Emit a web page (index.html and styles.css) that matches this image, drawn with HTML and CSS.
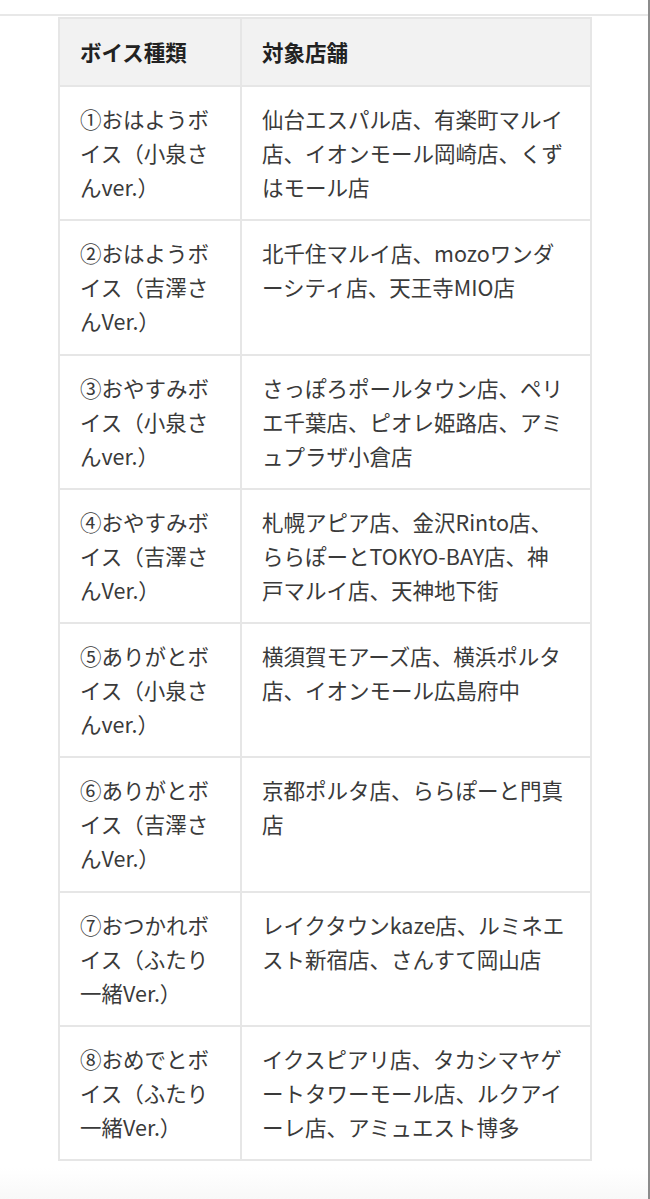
FILE: index.html
```html
<!DOCTYPE html>
<html lang="ja">
<head>
<meta charset="utf-8">
<link rel="stylesheet" href="styles.css">
</head>
<body>
<div class="page">
  <div class="rule"></div>
  <table class="voice-table">
    <colgroup><col class="c1"><col class="c2"></colgroup>
    <thead>
      <tr><th>ボイス種類</th><th>対象店舗</th></tr>
    </thead>
    <tbody>
      <tr><td>①おはようボ<br>イス（小泉さ<br>んver.）</td><td>仙台エスパル店、有楽町マルイ<br>店、イオンモール岡崎店、くず<br>はモール店</td></tr>
      <tr><td>②おはようボ<br>イス（吉澤さ<br>んVer.）</td><td>北千住マルイ店、mozoワンダ<br>ーシティ店、天王寺MIO店</td></tr>
      <tr><td>③おやすみボ<br>イス（小泉さ<br>んver.）</td><td>さっぽろポールタウン店、ペリ<br>エ千葉店、ピオレ姫路店、アミ<br>ュプラザ小倉店</td></tr>
      <tr><td>④おやすみボ<br>イス（吉澤さ<br>んVer.）</td><td>札幌アピア店、金沢Rinto店、<br>ららぽーとTOKYO-BAY店、神<br>戸マルイ店、天神地下街</td></tr>
      <tr><td>⑤ありがとボ<br>イス（小泉さ<br>んver.）</td><td>横須賀モアーズ店、横浜ポルタ<br>店、イオンモール広島府中</td></tr>
      <tr><td>⑥ありがとボ<br>イス（吉澤さ<br>んVer.）</td><td>京都ポルタ店、ららぽーと門真<br>店</td></tr>
      <tr><td>⑦おつかれボ<br>イス（ふたり<br>一緒Ver.）</td><td>レイクタウンkaze店、ルミネエ<br>スト新宿店、さんすて岡山店</td></tr>
      <tr><td>⑧おめでとボ<br>イス（ふたり<br>一緒Ver.）</td><td>イクスピアリ店、タカシマヤゲ<br>ートタワーモール店、ルクアイ<br>ーレ店、アミュエスト博多</td></tr>
    </tbody>
  </table>
</div>
</body>
</html>
```
FILE: styles.css
```css
html, body {
  margin: 0;
  padding: 0;
  background: #ffffff;
}
.page {
  width: 650px;
  height: 1199px;
  box-sizing: border-box;
  padding-top: 14px;
  border-right: 2px solid #8c8c8c;
  background: linear-gradient(to bottom, #ffffff 0, #ffffff 1168px, #f8f8f8 1199px);
  font-family: "Noto Sans CJK JP", "Noto Sans", sans-serif;
  overflow: hidden;
}
.rule {
  border-top: 2px solid #e8e8e8;
}
.voice-table {
  margin: 1px 0 0 58px;
  width: 532px;
  table-layout: fixed;
  border-collapse: collapse;
  font-size: 21.5px;
  line-height: 34px;
  color: #3a3a3a;
}
.voice-table col.c1 { width: 182px; }
.voice-table col.c2 { width: 350px; }
.voice-table th,
.voice-table td {
  border: 2px solid #e6e6e6;
  text-align: left;
  vertical-align: top;
  white-space: nowrap;
}
.voice-table th {
  background: #f2f2f2;
  font-weight: 700;
  color: #222222;
  padding: 16px 20px;
}
.voice-table td {
  padding: 15px 20px 15.25px;
  font-weight: 400;
}
```
